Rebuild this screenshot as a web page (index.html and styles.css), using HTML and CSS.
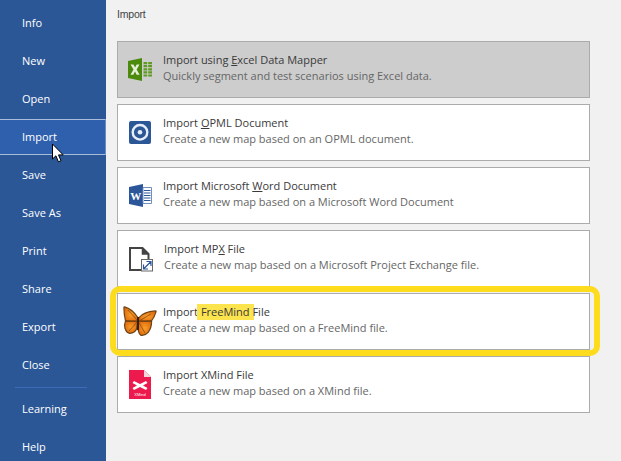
FILE: index.html
```html
<!DOCTYPE html>
<html lang="en">
<head>
<meta charset="utf-8">
<title>Import</title>
<link rel="stylesheet" href="styles.css">
</head>
<body>
<div class="app">
  <nav class="side">
    <a class="nav">Info</a>
    <a class="nav">New</a>
    <a class="nav">Open</a>
    <a class="nav active">Import
      <svg class="cursor" width="14" height="20" viewBox="0 0 14 20"><path d="M1.500 1v15l3.400-3.200 2.500 6 2.600-1.100-2.500-5.800h4.700z" fill="#fff" stroke="#000" stroke-width="1"/></svg>
    </a>
    <a class="nav">Save</a>
    <a class="nav">Save As</a>
    <a class="nav">Print</a>
    <a class="nav">Share</a>
    <a class="nav">Export</a>
    <a class="nav">Close</a>
    <div class="sep"></div>
    <a class="nav">Learning</a>
    <a class="nav">Help</a>
  </nav>
  <main class="main">
    <h1 class="title">Import</h1>
    <div class="list">
      <div class="card selected">
        <svg class="ico" width="26" height="27" viewBox="0 0 26 27">
          <path d="M1 5 15 2v23L1 22z" fill="#4c8a0e"/>
          <path d="M3.500 8.500h3l1.600 3.100 1.600-3.100h2.800l-2.900 5 3 5.200h-3l-1.600-3.300-1.700 3.300H3.500l3-5.200z" fill="#e6eedb"/>
          <path d="M16.500 6h3.700v2.200h-3.700zM21.200 6H25v2.200h-3.800zM16.500 9.100h3.700v2.200h-3.700zM21.200 9.100H25v2.200h-3.800zM16.500 12.200h3.700v2.200h-3.700zM21.200 12.200H25v2.200h-3.800zM16.500 15.300h3.700v2.200h-3.700zM21.200 15.300H25v2.200h-3.800zM16.500 18.400h3.700v2.200h-3.700zM21.200 18.400H25v2.200h-3.800z" fill="#5f9a22"/>
        </svg>
        <div class="txt">
          <div class="head">Import using <u>E</u>xcel Data Mapper</div>
          <div class="sub">Quickly segment and test scenarios using Excel data.</div>
        </div>
      </div>
      <div class="card">
        <svg class="ico" width="26" height="27" viewBox="0 0 26 27">
          <rect x="2" y="2" width="22" height="23" rx="2" fill="#2b5797"/>
          <circle cx="13" cy="13.300" r="7.300" fill="none" stroke="#e8eef7" stroke-width="2.400"/>
          <circle cx="13" cy="13.300" r="2.300" fill="#e8eef7"/>
        </svg>
        <div class="txt">
          <div class="head">Import <u>O</u>PML Document</div>
          <div class="sub">Create a new map based on an OPML document.</div>
        </div>
      </div>
      <div class="card">
        <svg class="ico" width="26" height="27" viewBox="0 0 26 27">
          <path d="M16 2v23L2 22V5z" fill="#2b579a"/>
          <path d="M16 5.500h8.500v16H16z" fill="#fff" stroke="#6f8fc0" stroke-width="1"/>
          <path d="M17 8.500h6.500M17 11h6.500M17 13.500h6.500M17 16h6.500M17 18.500h6.500" stroke="#2b579a" stroke-width="1.200"/>
          <text x="3.200" y="17.500" class="wmark">W</text>
        </svg>
        <div class="txt">
          <div class="head">Import Microsoft <u>W</u>ord Document</div>
          <div class="sub">Create a new map based on a Microsoft Word Document</div>
        </div>
      </div>
      <div class="card mpx">
        <svg class="ico" width="26" height="27" viewBox="0 0 26 27">
          <path d="M3 3h12.500l6 6v16H3z" fill="#fff" stroke="#444" stroke-width="2"/>
          <path d="M15.500 3v6h6" fill="#444" stroke="#444" stroke-width="1.500"/>
          <rect x="14.500" y="14.500" width="11" height="11.500" fill="#fff" stroke="#666"/>
          <path d="M16.500 24l7-7M19.500 16.500h4.500v4.500M16.500 19.500V24H21" fill="none" stroke="#2b579a" stroke-width="1.200"/>
        </svg>
        <div class="txt">
          <div class="head">Import MP<u>X</u> File</div>
          <div class="sub">Create a new map based on a Microsoft Project Exchange file.</div>
        </div>
      </div>
      <div class="card ringed">
        <svg class="ico fm" width="36" height="33" viewBox="0 0 36 33">
          <defs>
            <radialGradient id="wing" cx="50%" cy="50%" r="65%">
              <stop offset="0" stop-color="#fa9f2b"/>
              <stop offset="1" stop-color="#dd6408"/>
            </radialGradient>
            <filter id="soft" x="-10%" y="-10%" width="120%" height="120%">
              <feGaussianBlur stdDeviation=".45"/>
            </filter>
          </defs>
          <g filter="url(#soft)" fill="#6b4418" stroke="#6b4418" stroke-width="2.400" stroke-linejoin="round">
            <path d="M2.500 2.500C8 4 12 8 15 12.500L16 16.500 4 15.500C3 11 2.500 7 2.500 2.500z"/>
            <path d="M17.500 13C20 9.500 26 7 33.500 6.500 32.500 10 31 13 29 15.500L17 16.500z"/>
            <path d="M16.500 17 29 16.500C29 20 28 24 25.700 27 24 29 21 30 19 29.700 17 28 16.500 24 16.500 20z"/>
            <path d="M15 17 4 16.500C3 19 3 21 3.500 23 4.500 26 6 27.500 8 27.700 11 27.500 13 26 14 23.700z"/>
          </g>
          <g fill="url(#wing)">
            <path d="M2.500 2.500C8 4 12 8 15 12.500L16 16.500 4 15.500C3 11 2.500 7 2.500 2.500z"/>
            <path d="M17.500 13C20 9.500 26 7 33.500 6.500 32.500 10 31 13 29 15.500L17 16.500z"/>
            <path d="M16.500 17 29 16.500C29 20 28 24 25.700 27 24 29 21 30 19 29.700 17 28 16.500 24 16.500 20z"/>
            <path d="M15 17 4 16.500C3 19 3 21 3.500 23 4.500 26 6 27.500 8 27.700 11 27.500 13 26 14 23.700z"/>
          </g>
          <path d="M4 16h26" stroke="#6b3c0c" stroke-width="1.200"/>
          <path d="M6 5l10 11M29 9l-12 7M7 26l9-10M23 28l-7-12" stroke="#8a4c10" stroke-width=".8" fill="none"/>
          <path d="M16 12v13" stroke="#3a2006" stroke-width="2"/>
        </svg>
        <div class="txt">
          <div class="head">Import<span class="mark"> FreeMind </span>File</div>
          <div class="sub">Create a new map based on a FreeMind file.</div>
        </div>
        <div class="ring"></div>
      </div>
      <div class="card">
        <svg class="ico" width="26" height="31" viewBox="0 0 26 31">
          <path d="M2 1h15l7 7v22H2z" fill="#ec1a4d"/>
          <path d="M17 1l7 7h-7z" fill="#f3d6dc"/>
          <path d="M7 12l6 3 6-3 1.500 2-4.500 2.500 4.500 2.500-1.500 2-6-3-6 3-1.500-2 4.500-2.500L5.500 14z" fill="#fff"/>
          <text x="13" y="26.500" class="xmark">XMind</text>
        </svg>
        <div class="txt">
          <div class="head">Import XMind File</div>
          <div class="sub">Create a new map based on a XMind file.</div>
        </div>
      </div>
    </div>
  </main>
</div>
</body>
</html>
```
FILE: styles.css
```css
* { box-sizing: border-box; }
html, body { margin: 0; height: 100%; overflow: hidden; }
body { font-family: "Open Sans", "Noto Sans", sans-serif; font-size: 11px; background: #f1f1f1; }
.app { display: flex; height: 461px; width: 621px; }
.side {
  width: 106px;
  flex: none;
  background: #2b5797;
  padding-top: 4px;
  display: flex;
  flex-direction: column;
  color: #fff;
}
.nav {
  position: relative;
  height: 38px;
  line-height: 38px;
  padding-left: 22px;
  flex: none;
}
.nav.active {
  background: #2f60ae;
  border: 1px solid #a9bcd9;
  border-left: 0;
  border-right-color: #6f8cbd;
  height: 36px;
  line-height: 34px;
  margin: 1px 0;
}
.cursor { position: absolute; left: 51px; top: 23px; }
.sep { height: 1px; margin: 3px 19px 2px 15px; background: #3b6cb8; flex: none; }
.main { flex: 1; padding: 0 31px 0 11px; min-width: 0; }
.title {
  margin: 0;
  font-family: "Liberation Sans", sans-serif;
  font-size: 10.5px;
  letter-spacing: -.2px;
  font-weight: 400;
  color: #444;
  line-height: 14px;
  padding-top: 7px;
  height: 41px;
}
.list { display: flex; flex-direction: column; gap: 6px; }
.card {
  position: relative;
  display: flex;
  align-items: center;
  height: 57px;
  background: #fff;
  border: 1px solid #ababab;
  padding-left: 9px;
}
.card.selected { background: #cdcdcd; }
.ico { flex: none; margin-right: 10px; }
.fm { margin-left: -5px; margin-right: 5px; }
.mpx .ico { margin-right: 11px; }
.txt { line-height: 16px; margin-bottom: 4px; }
.head { color: #3a3a3a; }
.sub { color: #666; }
.head u { text-underline-offset: 1px; }
.mark {
  background: #fbe44e;
  padding: 0 2px 1px 1px;
  margin: 0 -2px 0 -1px;
}
.ring {
  position: absolute;
  left: -8px;
  right: -11px;
  top: -8px;
  bottom: -7px;
  border: 6px solid #fcdc1c;
  border-radius: 10px;
  pointer-events: none;
}
.wmark { font-family: "Liberation Serif", serif; font-weight: 700; font-size: 11px; fill: #fff; }
.xmark { font-family: "Liberation Sans", sans-serif; font-size: 4px; fill: #fff; text-anchor: middle; }
```
